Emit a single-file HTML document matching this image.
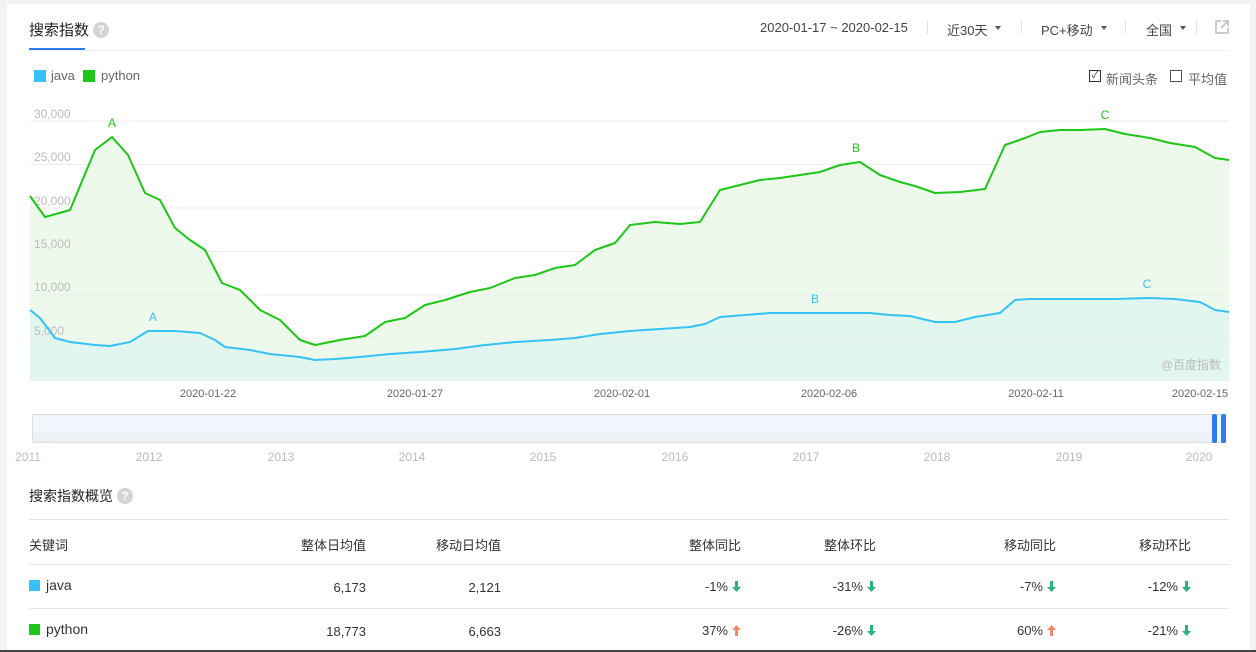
<!DOCTYPE html>
<html><head><meta charset="utf-8"><style>
*{margin:0;padding:0;box-sizing:border-box}
body{width:1256px;height:652px;background:#f3f3f3;font-family:"Liberation Sans","Noto Sans CJK SC",sans-serif;position:relative;overflow:hidden;color:#333}
.card{position:absolute;left:7px;top:4px;width:1243px;height:646px;background:#fff}
.a{position:absolute;white-space:nowrap}
.q{display:inline-block;width:16px;height:16px;border-radius:50%;background:#d4d4d4;color:#fff;font-size:12px;line-height:16px;text-align:center;font-weight:bold;vertical-align:1px}
.sep{position:absolute;top:20px;width:1px;height:14px;background:#e3e3e3}
.tri{display:inline-block;border:3px solid transparent;border-top:4px solid #555;margin-left:8px;vertical-align:2px}
.r{position:absolute;text-align:right;font-size:13px;white-space:nowrap}
.ar{display:inline-block;width:9px;height:11px;margin-left:4px;vertical-align:-1px}
.line{position:absolute;left:29px;width:1200px;height:1px;background:#e8e8e8}
</style></head><body>
<div class="card"></div>
<div class="a" style="left:29px;top:19px;font-size:15px;color:#222">搜索指数 <span class="q">?</span></div>
<div class="a" style="left:29px;top:48px;width:56px;height:2px;background:#2f7bf3"></div>
<div class="a" style="left:29px;top:50px;width:1200px;height:1px;background:#eee"></div>
<div class="a" style="left:760px;top:20px;font-size:13px;color:#444">2020-01-17 ~ 2020-02-15</div>
<div class="sep" style="left:927px"></div>
<div class="a" style="left:947px;top:20px;font-size:13px;color:#444">近30天<span class="tri"></span></div>
<div class="sep" style="left:1021px"></div>
<div class="a" style="left:1041px;top:20px;font-size:13px;color:#444">PC+移动<span class="tri"></span></div>
<div class="sep" style="left:1125px"></div>
<div class="a" style="left:1146px;top:20px;font-size:13px;color:#444">全国<span class="tri"></span></div>
<div class="sep" style="left:1196px"></div>
<svg class="a" style="left:1214px;top:19px" width="16" height="16"><path d="M7 2H2v12h12V9" fill="none" stroke="#bbb" stroke-width="1.5"/><path d="M9 2h5v5M14 2L7 9" fill="none" stroke="#bbb" stroke-width="1.5"/></svg>
<div class="a" style="left:34px;top:70px;width:12px;height:12px;background:#35c2f6"></div>
<div class="a" style="left:51px;top:68px;font-size:13px;color:#666">java</div>
<div class="a" style="left:83px;top:70px;width:12px;height:12px;background:#1ec617"></div>
<div class="a" style="left:101px;top:68px;font-size:13px;color:#666">python</div>
<div class="a" style="left:1089px;top:70px;width:12px;height:12px;border:1px solid #333;font-size:10px;line-height:10px;text-align:center">✓</div>
<div class="a" style="left:1106px;top:69px;font-size:13px;color:#666">新闻头条</div>
<div class="a" style="left:1170px;top:70px;width:12px;height:12px;border:1px solid #555"></div>
<div class="a" style="left:1188px;top:69px;font-size:13px;color:#666">平均值</div>
<svg class="a" style="left:0;top:100px" width="1256" height="300">
<g transform="translate(0,-100)">
<polygon fill="#eaf8e6" fill-opacity="0.85" points="30,196 45,217 70,210 95,150 112,137 128,155 145,193 160,200 175,228 190,240 205,250 222,283 240,290 260,310 280,320 300,340 315,345 340,340 365,336 385,322 405,318 425,305 445,300 470,292 490,288 515,278 535,275 555,268 575,265 595,250 615,243 630,225 655,222 680,224 700,222 720,190 740,185 760,180 780,178 800,175 820,172 840,165 860,162 880,175 900,182 915,186 935,193 960,192 985,189 1005,145 1025,138 1040,132 1060,130 1080,130 1105,129 1125,134 1150,138 1170,143 1195,147 1215,158 1229,160 1229,381 30,381"/>
<polygon fill="#e0f6ef" points="30,310 40,318 55,338 70,342 95,345 110,346 130,342 148,331 175,331 200,333 215,340 225,347 250,350 270,354 300,357 315,360 335,359 360,357 390,354 420,352 455,349 485,345 515,342 550,340 575,338 600,334 630,331 660,329 690,327 705,324 720,317 745,315 770,313 820,313 870,313 890,315 910,316 935,322 955,322 975,317 1000,313 1015,300 1030,299 1080,299 1115,299 1150,298 1175,299 1200,302 1215,310 1229,312 1229,381 30,381"/>
</g>
<g stroke="#eeeeee" stroke-width="1"><line x1="30" y1="21" x2="1229" y2="21"/><line x1="30" y1="64.5" x2="1229" y2="64.5"/><line x1="30" y1="108" x2="1229" y2="108"/><line x1="30" y1="151.5" x2="1229" y2="151.5"/><line x1="30" y1="195" x2="1229" y2="195"/><line x1="30" y1="238.5" x2="1229" y2="238.5"/></g>
<g font-size="12" fill="#bbb" font-family="Liberation Sans"><text x="34" y="18">30,000</text><text x="34" y="61">25,000</text><text x="34" y="105">20,000</text><text x="34" y="148">15,000</text><text x="34" y="191">10,000</text><text x="34" y="235">5,000</text></g>
<g transform="translate(0,-100)">
<polyline fill="none" stroke="#1ec617" stroke-width="2" stroke-linejoin="round" points="30,196 45,217 70,210 95,150 112,137 128,155 145,193 160,200 175,228 190,240 205,250 222,283 240,290 260,310 280,320 300,340 315,345 340,340 365,336 385,322 405,318 425,305 445,300 470,292 490,288 515,278 535,275 555,268 575,265 595,250 615,243 630,225 655,222 680,224 700,222 720,190 740,185 760,180 780,178 800,175 820,172 840,165 860,162 880,175 900,182 915,186 935,193 960,192 985,189 1005,145 1025,138 1040,132 1060,130 1080,130 1105,129 1125,134 1150,138 1170,143 1195,147 1215,158 1229,160"/>
<polyline fill="none" stroke="#35c2f6" stroke-width="2" stroke-linejoin="round" points="30,310 40,318 55,338 70,342 95,345 110,346 130,342 148,331 175,331 200,333 215,340 225,347 250,350 270,354 300,357 315,360 335,359 360,357 390,354 420,352 455,349 485,345 515,342 550,340 575,338 600,334 630,331 660,329 690,327 705,324 720,317 745,315 770,313 820,313 870,313 890,315 910,316 935,322 955,322 975,317 1000,313 1015,300 1030,299 1080,299 1115,299 1150,298 1175,299 1200,302 1215,310 1229,312"/>
<g font-size="12" font-family="Liberation Sans" text-anchor="middle"><g fill="#1ec617"><text x="112" y="127">A</text><text x="856" y="152">B</text><text x="1105" y="119">C</text></g><g fill="#35c2f6"><text x="153" y="321">A</text><text x="815" y="303">B</text><text x="1147" y="288">C</text></g></g>
<text x="1221" y="369" font-size="12" fill="#bbb" text-anchor="end" font-family="Liberation Sans,Noto Sans CJK SC">@百度指数</text>
<g font-size="11" fill="#666" text-anchor="middle" font-family="Liberation Sans"><text x="208" y="397">2020-01-22</text><text x="415" y="397">2020-01-27</text><text x="622" y="397">2020-02-01</text><text x="829" y="397">2020-02-06</text><text x="1036" y="397">2020-02-11</text><text x="1200" y="397">2020-02-15</text></g>
</g></svg>
<div class="a" style="left:32px;top:414px;width:1194px;height:29px;background:#f3f7fd;border:1px solid #ddd"></div>
<div class="a" style="left:33px;top:433px;width:1180px;height:9px;background:#edf0f5"></div>
<div class="a" style="left:1212px;top:414px;width:5px;height:29px;background:#2f7bf3;border-radius:2px"></div>
<div class="a" style="left:1221px;top:414px;width:5px;height:29px;background:#2f7bf3;border-radius:2px"></div>
<svg class="a" style="left:0;top:445px" width="1256" height="25"><g font-size="12" fill="#bbb" text-anchor="middle" font-family="Liberation Sans"><text x="28" y="16">2011</text><text x="149" y="16">2012</text><text x="281" y="16">2013</text><text x="412" y="16">2014</text><text x="543" y="16">2015</text><text x="675" y="16">2016</text><text x="806" y="16">2017</text><text x="937" y="16">2018</text><text x="1069" y="16">2019</text><text x="1199" y="16">2020</text></g></svg>
<div class="a" style="left:29px;top:486px;font-size:14px;color:#222">搜索指数概览 <span class="q">?</span></div>
<div class="line" style="top:519px;background:#e3e3e3"></div>
<div class="line" style="top:564px"></div>
<div class="line" style="top:608px"></div>
<div class="a" style="left:29px;top:535px;font-size:13px">关键词</div>
<div class="r" style="right:890px;top:535px">整体日均值</div>
<div class="r" style="right:755px;top:535px">移动日均值</div>
<div class="r" style="right:515px;top:535px">整体同比</div>
<div class="r" style="right:380px;top:535px">整体环比</div>
<div class="r" style="right:200px;top:535px">移动同比</div>
<div class="r" style="right:65px;top:535px">移动环比</div>
<div class="a" style="left:29px;top:580px;width:11px;height:11px;background:#35c2f6"></div>
<div class="a" style="left:46px;top:577px;font-size:14px">java</div>
<div class="a" style="left:29px;top:624px;width:11px;height:11px;background:#1ec617"></div>
<div class="a" style="left:46px;top:621px;font-size:14px">python</div>
<div class="r" style="right:890px;top:580px">6,173</div>
<div class="r" style="right:755px;top:580px">2,121</div>
<div class="r" style="right:515px;top:579px">-1%<svg class="ar" viewBox="0 0 9 11"><path d="M3 0h3v6h3L4.5 11 0 6h3z" fill="#2bb57c"/></svg></div>
<div class="r" style="right:380px;top:579px">-31%<svg class="ar" viewBox="0 0 9 11"><path d="M3 0h3v6h3L4.5 11 0 6h3z" fill="#2bb57c"/></svg></div>
<div class="r" style="right:200px;top:579px">-7%<svg class="ar" viewBox="0 0 9 11"><path d="M3 0h3v6h3L4.5 11 0 6h3z" fill="#2bb57c"/></svg></div>
<div class="r" style="right:65px;top:579px">-12%<svg class="ar" viewBox="0 0 9 11"><path d="M3 0h3v6h3L4.5 11 0 6h3z" fill="#2bb57c"/></svg></div>
<div class="r" style="right:890px;top:624px">18,773</div>
<div class="r" style="right:755px;top:624px">6,663</div>
<div class="r" style="right:515px;top:623px">37%<svg class="ar" viewBox="0 0 9 11"><path d="M3 11h3V5h3L4.5 0 0 5h3z" fill="#f7866a"/></svg></div>
<div class="r" style="right:380px;top:623px">-26%<svg class="ar" viewBox="0 0 9 11"><path d="M3 0h3v6h3L4.5 11 0 6h3z" fill="#2bb57c"/></svg></div>
<div class="r" style="right:200px;top:623px">60%<svg class="ar" viewBox="0 0 9 11"><path d="M3 11h3V5h3L4.5 0 0 5h3z" fill="#f7866a"/></svg></div>
<div class="r" style="right:65px;top:623px">-21%<svg class="ar" viewBox="0 0 9 11"><path d="M3 0h3v6h3L4.5 11 0 6h3z" fill="#2bb57c"/></svg></div>
<div class="a" style="left:0;top:650px;width:1256px;height:2px;background:#444"></div>
</body></html>
